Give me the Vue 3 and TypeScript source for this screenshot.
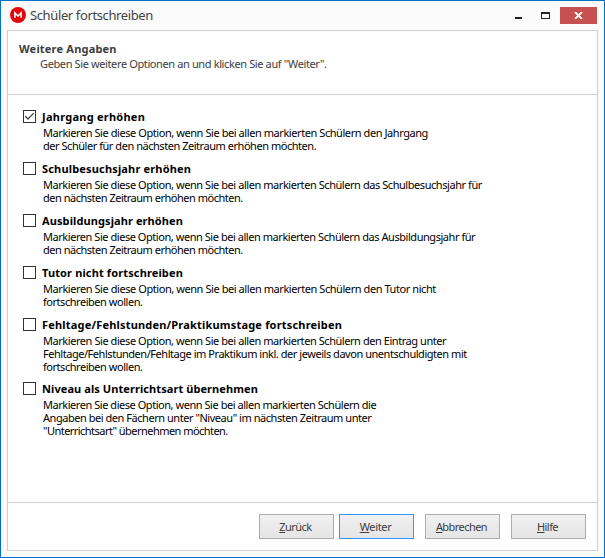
<script setup lang="ts">
import { ref } from 'vue'

interface Line { text: string; spacing: number }
interface Option { title: string; titleSpacing: number; checked: boolean; lines: Line[] }
interface Action { key: string; rest: string; kind: string }

const options = ref<Option[]>([
  { title: 'Jahrgang erhöhen', titleSpacing: 0.25, checked: true, lines: [
    { text: 'Markieren Sie diese Option, wenn Sie bei allen markierten Schülern den Jahrgang', spacing: -0.43 },
    { text: 'der Schüler für den nächsten Zeitraum erhöhen möchten.', spacing: -0.46 } ] },
  { title: 'Schulbesuchsjahr erhöhen', titleSpacing: 0.17, checked: false, lines: [
    { text: 'Markieren Sie diese Option, wenn Sie bei allen markierten Schülern das Schulbesuchsjahr für', spacing: -0.44 },
    { text: 'den nächsten Zeitraum erhöhen möchten.', spacing: -0.49 } ] },
  { title: 'Ausbildungsjahr erhöhen', titleSpacing: 0.1, checked: false, lines: [
    { text: 'Markieren Sie diese Option, wenn Sie bei allen markierten Schülern das Ausbildungsjahr für', spacing: -0.45 },
    { text: 'den nächsten Zeitraum erhöhen möchten.', spacing: -0.49 } ] },
  { title: 'Tutor nicht fortschreiben', titleSpacing: 0.13, checked: false, lines: [
    { text: 'Markieren Sie diese Option, wenn Sie bei allen markierten Schülern den Tutor nicht', spacing: -0.43 },
    { text: 'fortschreiben wollen.', spacing: -0.46 } ] },
  { title: 'Fehltage/Fehlstunden/Praktikumstage fortschreiben', titleSpacing: 0.19, checked: false, lines: [
    { text: 'Markieren Sie diese Option, wenn Sie bei allen markierten Schülern den Eintrag unter', spacing: -0.44 },
    { text: 'Fehltage/Fehlstunden/Fehltage im Praktikum inkl. der jeweils davon unentschuldigten mit', spacing: -0.46 },
    { text: 'fortschreiben wollen.', spacing: -0.46 } ] },
  { title: 'Niveau als Unterrichtsart übernehmen', titleSpacing: 0.08, checked: false, lines: [
    { text: 'Markieren Sie diese Option, wenn Sie bei allen markierten Schülern die', spacing: -0.457 },
    { text: 'Angaben bei den Fächern unter "Niveau" im nächsten Zeitraum unter', spacing: -0.46 },
    { text: '"Unterrichtsart" übernehmen möchten.', spacing: -0.54 } ] },
])

const actions: Action[] = [
  { key: 'Z', rest: 'urück', kind: 'back' },
  { key: 'W', rest: 'eiter', kind: 'next' },
  { key: 'A', rest: 'bbrechen', kind: 'cancel' },
  { key: 'H', rest: 'ilfe', kind: 'help' },
]
</script>

<template>
  <div class="window">
    <header class="titlebar">
      <svg class="logo" width="16" height="16" viewBox="0 0 16 16">
        <circle cx="8" cy="8" r="8" fill="#e3060b" />
        <path d="M4.9 10.8V6L8 9l3.1-3V10.8" fill="none" stroke="#fff" stroke-width="1.6" />
      </svg>
      <h1 class="caption">Schüler fortschreiben</h1>
      <div class="controls">
        <svg class="min" width="7" height="2"><rect width="7" height="2" fill="#222" /></svg>
        <svg class="max" width="9" height="7" shape-rendering="crispEdges"><path d="M0 0h9v7H0zM1 2v4h7V2z" fill="#222" fill-rule="evenodd" /></svg>
        <button class="close" aria-label="Schließen">
          <svg width="9" height="7" viewBox="0 0 9 7"><path d="M1 0l7 7M8 0L1 7" stroke="#fff" stroke-width="1.8" /></svg>
        </button>
      </div>
    </header>
    <main class="panel">
      <section class="intro">
        <h2>Weitere Angaben</h2>
        <p>Geben Sie weitere Optionen an und klicken Sie auf "Weiter".</p>
      </section>
      <section class="options">
        <label v-for="o in options" :key="o.title" class="option" :class="{ tall: o.lines.length > 2 }">
          <input v-model="o.checked" type="checkbox" class="native">
          <span class="box">
            <svg v-if="o.checked" width="11" height="11" viewBox="0 0 11 11"><path d="M1.3 5.2L4 8L9.7 2.1" fill="none" stroke="#444" stroke-width="1.3" /></svg>
          </span>
          <span class="copy">
            <span class="name" :style="{ letterSpacing: o.titleSpacing + 'px' }">{{ o.title }}</span>
            <span v-for="l in o.lines" :key="l.text" class="line" :style="{ letterSpacing: l.spacing + 'px' }">{{ l.text }}</span>
          </span>
        </label>
      </section>
      <footer class="actions">
        <button v-for="a in actions" :key="a.key" class="action" :class="a.kind"><span><u>{{ a.key }}</u>{{ a.rest }}</span></button>
      </footer>
    </main>
  </div>
</template>

<style>
body { margin: 0; }
</style>

<style scoped>
.window { box-sizing: border-box; width: 605px; height: 558px; border: 1px solid #0072c6; background: #fbfbfb; padding: 0 6px 6px; display: flex; flex-direction: column; font: 11px/13px "Noto Sans", "Open Sans", sans-serif; color: #000; white-space: nowrap; }
.titlebar { height: 29px; flex: none; display: flex; align-items: flex-start; }
.logo { margin: 6px 0 0 3px; }
.caption { margin: 5px 0 0 4px; font-size: 13px; line-height: 18px; font-weight: 400; letter-spacing: -0.38px; color: #444; }
.controls { margin-left: auto; display: flex; align-items: flex-start; }
.min { margin-top: 16px; }
.max { margin: 11px 10px 0 19px; }
.close { margin: 6px 1px 0 0; width: 37px; height: 17px; padding: 0; border: 0; background: #c75050; display: flex; align-items: center; justify-content: center; }
.panel { box-sizing: border-box; flex: 1; border: 1px solid #d0d0d0; background: #fff; display: flex; flex-direction: column; }
.intro { box-sizing: border-box; height: 64px; padding: 11px 11px 0; border-bottom: 1px solid #d0d0d0; color: #3c3c3c; }
.intro h2 { margin: 0; font-size: 11px; line-height: 13px; letter-spacing: 0.2px; }
.intro p { margin: 2px 0 0 21px; letter-spacing: -0.38px; }
.options { flex: 1; padding: 15px 15px 0; }
.option { display: flex; gap: 6px; height: 52px; }
.option.tall { height: 64px; }
.native { position: absolute; opacity: 0; }
.box { box-sizing: border-box; flex: none; width: 13px; height: 13px; border: 1px solid #333; display: flex; }
.copy { display: flex; flex-direction: column; align-items: flex-start; }
.name { font-weight: 700; margin-bottom: 3px; }
.line { margin-left: 1px; }
.actions { box-sizing: border-box; height: 48px; border-top: 1px solid #d0d0d0; display: flex; justify-content: flex-end; padding: 11px 11px 0; }
.action { box-sizing: border-box; width: 75px; height: 25px; padding: 0 2px 0 0; border: 1px solid #acacac; background: linear-gradient(#f0f0f0, #e5e5e5); font: inherit; letter-spacing: -0.55px; color: #3c3c3c; }
.action u { text-underline-offset: 1px; }
.next { margin: 0 11px 0 5px; border-color: #3399ff; letter-spacing: -0.35px; }
.cancel { margin-right: 11px; }
</style>
